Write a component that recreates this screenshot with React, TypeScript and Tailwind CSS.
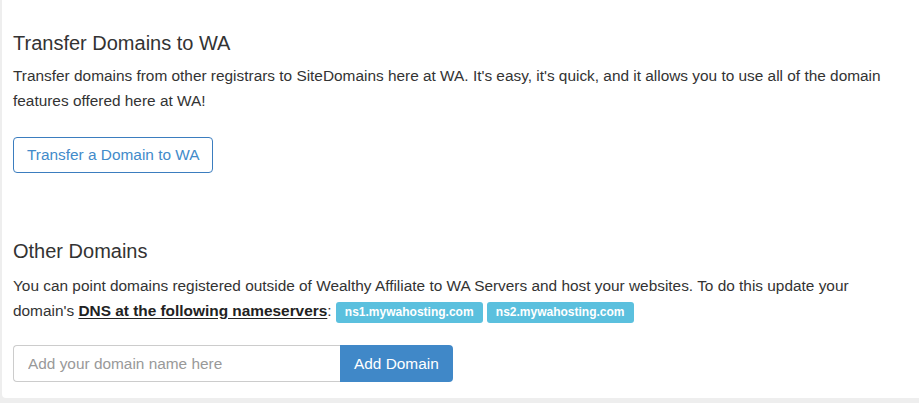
export default function App() {
  return (
    <div className="flex h-screen flex-col bg-[#eeeeee] pb-[5px] pl-[2px] font-['Liberation_Sans',Arial,sans-serif] text-[#333333]">
      <div className="flex-1 rounded-bl-[4px] bg-white pl-[11px] pr-[24px] pt-[32px]">
        {/* Transfer section */}
        <h3 className="text-[20px] leading-[22px]">Transfer Domains to WA</h3>
        <p className="mt-[10px] text-[15.4px] leading-[24.5px]">
          Transfer domains from other registrars to SiteDomains here at WA. It's easy, it's quick, and it allows you
          to use all of the domain features offered here at WA!
        </p>
        <button className="mt-[24px] rounded-[4px] border border-[#3b7dbf] bg-white px-[13px] py-[6px] text-[15.4px] leading-[22px] text-[#428bca]">
          Transfer a Domain to WA
        </button>

        {/* Other domains */}
        <h3 className="mt-[67px] text-[20px] leading-[22px]">Other Domains</h3>
        <p className="mt-[12px] text-[15.4px] leading-[24.5px]">
          You can point domains registered outside of Wealthy Affiliate to WA Servers and host your websites. To do
          this update your domain's{' '}
          <a className="font-bold text-[#222222] underline underline-offset-2" href="#">
            DNS at the following nameservers
          </a>
          :{' '}
          <span className="inline-block rounded-[3px] bg-[#5bc0de] px-[9px] pb-[5px] pt-[4px] text-[12px] font-bold leading-[12px] text-white">
            ns1.mywahosting.com
          </span>{' '}
          <span className="inline-block rounded-[3px] bg-[#5bc0de] px-[9px] pb-[5px] pt-[4px] text-[12px] font-bold leading-[12px] text-white">
            ns2.mywahosting.com
          </span>
        </p>
        <div className="mt-[22px] flex">
          <input
            className="h-[37px] w-[327px] rounded-l-[4px] border border-r-0 border-[#cccccc] px-[14px] text-[15.4px] text-[#555555] outline-none placeholder:text-[#999999]"
            placeholder="Add your domain name here"
          />
          <button className="h-[37px] whitespace-nowrap rounded-r-[4px] bg-[#4088c8] px-[14px] text-[15.4px] text-white">
            Add Domain
          </button>
        </div>
      </div>
    </div>
  );
}
